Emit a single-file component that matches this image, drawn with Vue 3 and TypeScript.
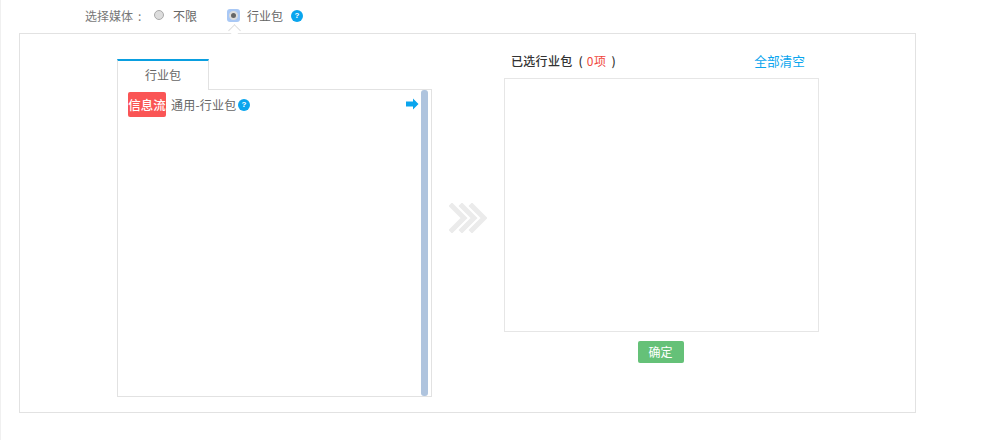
<script setup lang="ts">
const title = '行业包'
</script>

<template>
  <div class="page">
    <div class="media-row">
      <span class="media-label">选择媒体<span class="colon">:</span></span>
      <span class="radio"></span>
      <span class="opt-a">不限</span>
      <span class="radio-on"><i></i><b class="caret"></b></span>
      <span class="opt-b">{{ title }}</span>
      <span class="help big">?</span>
    </div>
    <div class="panel">
      <div class="left">
        <div class="tab">{{ title }}</div>
        <div class="list">
          <div class="item">
            <span class="tag">信息流</span>
            <span class="item-name">通用-行业包</span>
            <span class="help">?</span>
            <svg class="arrow" width="13" height="12" viewBox="0 0 13 12">
              <path d="M0 3.5h7V0.5L12.5 6 7 11.500V8.500H0z" fill="#0aa5ee" />
            </svg>
          </div>
          <div class="scroll"></div>
        </div>
      </div>
      <div class="middle">
        <svg width="38" height="30" viewBox="0 0 38 30">
          <g fill="none" stroke="#ebebeb" stroke-width="5" stroke-linecap="square">
            <path d="M3 3l12 12L3 27" />
            <path d="M13 3l12 12-12 12" />
            <path d="M23 3l12 12-12 12" />
          </g>
        </svg>
      </div>
      <div class="right">
        <div class="right-head">
          <span class="selected"><span class="sel-title">已选{{ title }}</span><span class="paren open">(</span><em>0项</em><span class="paren close">)</span></span>
          <a class="clear">全部清空</a>
        </div>
        <div class="box"></div>
        <div class="actions"><button class="ok">确定</button></div>
      </div>
    </div>
  </div>
</template>

<style>
html, body { background: #fff; margin: 0; }
</style>

<style scoped>
.page {
  width: 1004px;
  height: 440px;
  box-sizing: border-box;
  border-left: 1px solid #f0f0f0;
  font-family: "Noto Sans CJK SC", "Liberation Sans", sans-serif;
  font-size: 12px;
  color: #666;
  overflow: hidden;
}
.media-row {
  height: 33px;
  display: flex;
  align-items: center;
  padding: 0 0 3px 84px;
  box-sizing: border-box;
}
.media-label { width: 69px; white-space: nowrap; color: #777; padding-top: 1px; }
.colon { margin-left: 5px; }
.radio {
  width: 10px;
  height: 10px;
  box-sizing: border-box;
  border: 1px solid #aaa;
  border-radius: 50%;
  background: #ddd;
}
.opt-a { margin-left: 9px; width: 54px; padding-top: 1px; }
.radio-on {
  position: relative;
  width: 13px;
  height: 13px;
  background: #a9c8f5;
  border-radius: 3px;
  display: flex;
  align-items: center;
  justify-content: center;
}
.radio-on i {
  width: 9px;
  height: 9px;
  box-sizing: border-box;
  border-radius: 50%;
  background: #666;
  border: 2px solid #ddd;
}
.caret {
  position: absolute;
  left: 3px;
  top: 17px;
  width: 8px;
  height: 8px;
  background: #fff;
  border-left: 1px solid #ddd;
  border-top: 1px solid #ddd;
  transform: rotate(45deg);
  z-index: 1;
}
.opt-b { margin-left: 7px; width: 44px; padding-top: 1px; }
.help {
  width: 12px;
  height: 12px;
  border-radius: 50%;
  background: #0aa5ee;
  color: #fff;
  font: bold 8px/12px "Liberation Sans", sans-serif;
  text-align: center;
  flex: none;
}
.big { margin-top: 2px; }
.panel {
  margin-left: 18px;
  width: 897px;
  height: 380px;
  box-sizing: border-box;
  border: 1px solid #e2e2e2;
  padding: 25px 0 0 97px;
  display: flex;
  align-items: flex-start;
}
.left { width: 315px; flex: none; }
.tab {
  width: 92px;
  height: 31px;
  box-sizing: border-box;
  border: 1px solid #e2e2e2;
  border-top: 2px solid #0a9fe0;
  border-bottom: none;
  background: #fff;
  text-align: center;
  line-height: 28px;
  position: relative;
  z-index: 1;
  margin-bottom: -1px;
}
.list {
  height: 308px;
  box-sizing: border-box;
  border: 1px solid #e2e2e2;
  position: relative;
}
.item {
  display: flex;
  align-items: center;
  padding: 2px 0 0 10px;
}
.tag {
  width: 38px;
  height: 25px;
  background: #fa5555;
  border-radius: 2px;
  color: #fff;
  font-size: 12.500px;
  font-weight: 500;
  line-height: 25px;
  text-align: center;
  white-space: nowrap;
  flex: none;
}
.item-name { margin-left: 5px; width: 67px; white-space: nowrap; line-height: 25px; letter-spacing: 0.2px; }
.arrow { margin-left: 156px; margin-top: -2px; }
.scroll {
  position: absolute;
  top: 0;
  right: 3px;
  bottom: 0;
  width: 7px;
  border-radius: 3px;
  background: #afc4de;
}
.middle {
  width: 72px;
  flex: none;
  height: 290px;
  padding-top: 144px;
  box-sizing: border-box;
  display: flex;
  justify-content: center;
  align-items: flex-start;
}
.right { width: 315px; flex: none; }
.right-head {
  height: 19px;
  display: flex;
  justify-content: space-between;
  padding: 0 14px 0 7px;
  line-height: 17px;
  align-items: flex-start;
  margin-top: -7px;
  margin-bottom: 7px;
}
.selected { color: #333; font-weight: 500; white-space: nowrap; }
.sel-title { letter-spacing: 0.3px; }
.paren { font-weight: 500; }
.open { margin-left: 6px; margin-right: 4px; }
.close { margin-left: 5px; }
.selected em { font-style: normal; font-weight: 400; color: #f0473c; letter-spacing: 0.5px; }
.clear { color: #0aa5ee; font-size: 12.700px; }
.box {
  height: 254px;
  box-sizing: border-box;
  border: 1px solid #e6e6e6;
}
.actions { display: flex; justify-content: center; margin-top: 9px; padding-right: 2px; }
.ok {
  width: 46px;
  height: 22px;
  border: none;
  border-radius: 2px;
  background: #65c178;
  color: #fff;
  font: 12px/22px "Noto Sans CJK SC", sans-serif;
  padding: 0;
}
</style>
